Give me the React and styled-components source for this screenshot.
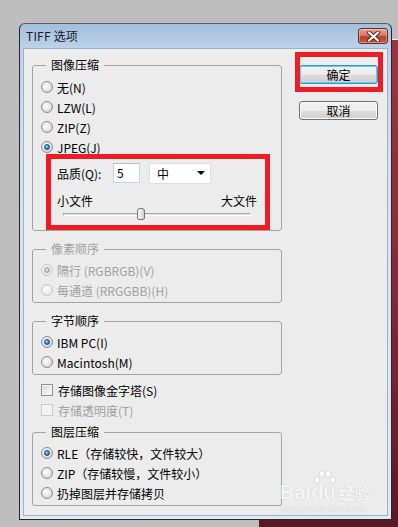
import React from 'react';
import styled, { createGlobalStyle } from 'styled-components';

const GlobalStyle = createGlobalStyle`
    html, body {
        margin: 0;
        padding: 0;
        background: #bebebe;
    }
`;

const Page = styled.div`
    position: relative;
    width: 398px;
    height: 527px;
    overflow: hidden;
    background: #bebebe;
    font-family: "Noto Sans CJK SC", "Noto Sans", sans-serif;
    font-size: 12px;
    color: #000;
`;

const Photo = styled.div`
    position: absolute;
    left: 259px;
    top: 39px;
    right: 0;
    bottom: 0;
    border-top: 1px solid #f2f2f2;
    background: linear-gradient(180deg, #9b3447 0%, #86283a 50%, #5a1824 100%);
`;

const Window = styled.div`
    position: absolute;
    left: 19px;
    top: 23px;
    width: 373px;
    height: 497px;
    box-sizing: border-box;
    display: flex;
    flex-direction: column;
    border: 1px solid #262626;
    border-top-color: #5c5c5c;
    border-radius: 6px 6px 0 0;
    background: linear-gradient(180deg, #a3bedc 0, #bcd2ea 24px, #d2e1f1 140px, #e0eaf5 100%);
`;

const TitleBar = styled.div`
    height: 24px;
    flex: none;
    display: flex;
    align-items: center;
    justify-content: space-between;
    padding: 0 3px 0 6px;
`;

const Title = styled.span`
    font-size: 12px;
    color: #1a1a1a;
    line-height: 16px;
    letter-spacing: 0.2px;
`;

const CloseButton = styled.div`
    width: 30px;
    height: 16px;
    box-sizing: border-box;
    display: flex;
    align-items: center;
    justify-content: center;
    border: 1px solid #6b2a1f;
    border-radius: 3px;
    background: linear-gradient(180deg, #e3a493 0%, #d07a64 45%, #b7442e 55%, #c45a40 100%);
    box-shadow: inset 0 0 0 1px rgba(255, 255, 255, 0.35);
`;

const Client = styled.div`
    flex: 1;
    margin: 0 3px 3px;
    border: 1px solid #9db2c9;
    background: #ececec;
    display: flex;
    padding: 8px 0 0 8px;
`;

const LeftColumn = styled.div`
    width: 250px;
    display: flex;
    flex-direction: column;
`;

const ButtonColumn = styled.div`
    display: flex;
    flex-direction: column;
    gap: 17px;
    margin: 8px 0 0 17px;
`;

const GroupBox = styled.fieldset`
    margin: ${(p) => p.$gap || 0}px 0 0;
    padding: ${(p) => p.$padTop || 3}px 0 ${(p) => p.$padBottom || 2}px 8px;
    border: 1px solid #a3a3a3;
    border-radius: 3px;
    min-width: 0;
`;

const Legend = styled.legend`
    padding: 0 5px;
    margin-left: 5px;
    font-size: 12px;
    line-height: 16px;
    color: ${(p) => (p.$disabled ? '#a0a0a0' : '#000')};
`;

const OptionRow = styled.div`
    height: 20px;
    display: flex;
    align-items: center;
    gap: 4px;
    color: ${(p) => (p.$disabled ? '#a0a0a0' : '#000')};
    white-space: nowrap;
`;

const RadioMark = styled.span`
    position: relative;
    flex: none;
    width: 12px;
    height: 12px;
    box-sizing: border-box;
    border-radius: 50%;
    border: 1px solid ${(p) => (p.$disabled ? '#c6c6c6' : '#8c8c8c')};
    background: ${(p) =>
        p.$disabled
            ? 'radial-gradient(circle at 40% 40%, #fbfbfb 0, #eeeeee 55%, #e0e0e0 100%)'
            : 'radial-gradient(circle at 40% 40%, #ffffff 0, #e8e8e8 45%, #c6c6c6 100%)'};

    &::after {
        content: '';
        display: ${(p) => (p.$checked ? 'block' : 'none')};
        position: absolute;
        left: 2px;
        top: 2px;
        width: 6px;
        height: 6px;
        box-sizing: border-box;
        border-radius: 50%;
        border: 1px solid ${(p) => (p.$disabled ? '#9a9a9a' : '#174a80')};
        background: ${(p) =>
            p.$disabled
                ? 'radial-gradient(circle at 40% 35%, #e6e6e6 0, #b0b0b0 100%)'
                : 'radial-gradient(circle at 40% 35%, #b5e6ff 0, #3298ea 45%, #0e5aa8 100%)'};
    }
`;

const CheckMark = styled.span`
    flex: none;
    width: 12px;
    height: 12px;
    box-sizing: border-box;
    margin-right: 1px;
    border: 1px solid ${(p) => (p.$disabled ? '#c8c8c8' : '#8e8e8e')};
    background: ${(p) =>
        p.$disabled
            ? '#f2f2f2'
            : 'linear-gradient(135deg, #d6d6d6 0%, #eeeeee 60%, #fafafa 100%)'};
    box-shadow: inset 0 0 0 1px ${(p) => (p.$disabled ? '#f7f7f7' : '#f4f4f4')};
`;

const QualityPanel = styled.div`
    width: 200px;
    margin: 0 0 0 16px;
    padding: 6px 0 8px;
`;

const QualityRow = styled.div`
    display: flex;
    align-items: center;
    height: 20px;
`;

const FieldLabel = styled.span`
    width: 56px;
    flex: none;
`;

const NumberField = styled.div`
    width: 27px;
    height: 20px;
    box-sizing: border-box;
    border: 1px solid #c9d3de;
    border-top-color: #b5c0cc;
    background: #fff;
    padding-left: 3px;
    line-height: 18px;
`;

const Select = styled.div`
    width: 62px;
    height: 21px;
    box-sizing: border-box;
    margin-left: 9px;
    border: 1px solid #d8dfe7;
    background: #fff;
    display: flex;
    align-items: center;
    justify-content: space-between;
    padding: 0 5px 0 7px;
`;

const Arrow = styled.span`
    width: 0;
    height: 0;
    border-left: 4px solid transparent;
    border-right: 4px solid transparent;
    border-top: 4px solid #000;
`;

const SizeLabels = styled.div`
    display: flex;
    justify-content: space-between;
    line-height: 14px;
    margin-top: 11px;
`;

const Slider = styled.div`
    position: relative;
    width: 188px;
    height: 12px;
    margin-left: 6px;
    display: flex;
    align-items: center;
`;

const Track = styled.div`
    width: 100%;
    height: 3px;
    box-sizing: border-box;
    border-top: 1px solid #a9a9a9;
    border-left: 1px solid #a9a9a9;
    border-bottom: 1px solid #ffffff;
    border-right: 1px solid #ffffff;
    background: #dedede;
`;

const Thumb = styled.div`
    position: absolute;
    top: 0;
    width: 8px;
    height: 12px;
    box-sizing: border-box;
    margin-left: -4px;
    border: 1px solid #767676;
    border-radius: 3px 3px 2px 2px;
    background: linear-gradient(90deg, #f7f7f7 0%, #e6e6e6 50%, #cfcfcf 100%);
`;

const CheckList = styled.div`
    margin-top: 5px;
    padding-left: 9px;
`;

const Button = styled.div`
    width: 79px;
    height: 19px;
    box-sizing: border-box;
    display: flex;
    align-items: center;
    justify-content: center;
    border: 1px solid ${(p) => (p.$focused ? '#3a8fc6' : '#707070')};
    border-radius: 3px;
    background: linear-gradient(180deg, #f3f3f3 0%, #ebebeb 50%, #dddddd 51%, #cfcfcf 100%);
    box-shadow: inset 0 0 0 1px ${(p) => (p.$focused ? '#5fd0f4' : '#fbfbfb')};
    line-height: 16px;
`;

const Highlight = styled.div`
    position: absolute;
    left: ${(p) => p.$x}px;
    top: ${(p) => p.$y}px;
    width: ${(p) => p.$w}px;
    height: ${(p) => p.$h}px;
    box-sizing: border-box;
    border: 5px solid #ee1c25;
    pointer-events: none;
`;

const Watermark = styled.div`
    position: absolute;
    left: 280px;
    top: 470px;
    width: 92px;
    color: rgba(255, 255, 255, 0.9);
    text-shadow: 0 0 1px rgba(110, 110, 110, 0.45);
    pointer-events: none;
`;

const Brand = styled.div`
    position: relative;
    display: flex;
    align-items: flex-end;
    height: 32px;
    font-family: "Liberation Sans", Arial, sans-serif;
    font-weight: bold;
    font-size: 20px;
    line-height: 20px;
`;

const BrandCn = styled.span`
    font-family: "Noto Sans CJK SC", sans-serif;
    font-size: 16px;
    line-height: 20px;
    font-weight: bold;
    margin-left: 3px;
`;

const Paw = styled.svg`
    position: absolute;
    left: 33px;
    top: 0;
`;

const Domain = styled.div`
    font-family: "Liberation Serif", serif;
    font-size: 11px;
    line-height: 12px;
    letter-spacing: 0.3px;
`;

const Radio = ({ label, checked, disabled }) => (
    <OptionRow $disabled={disabled}>
        <RadioMark $checked={checked} $disabled={disabled} />
        {label}
    </OptionRow>
);

const Checkbox = ({ label, disabled }) => (
    <OptionRow $disabled={disabled}>
        <CheckMark $disabled={disabled} />
        {label}
    </OptionRow>
);

const quality = 5;
const qualityMax = 12;

const App = () => (
    <Page>
        <GlobalStyle />
        <Photo />
        <Window>
            <TitleBar>
                <Title>TIFF 选项</Title>
                <CloseButton>
                    <svg width="13" height="11" viewBox="0 0 13 11">
                        <path d="M2 1.5 L11 9.5 M11 1.5 L2 9.5" stroke="#5a2018" strokeWidth="4" strokeLinecap="round" />
                        <path d="M2 1.5 L11 9.5 M11 1.5 L2 9.5" stroke="#ffffff" strokeWidth="2.2" strokeLinecap="round" />
                    </svg>
                </CloseButton>
            </TitleBar>
            <Client>
                <LeftColumn>
                    <GroupBox $padTop={4} $padBottom={0}>
                        <Legend>图像压缩</Legend>
                        <Radio label="无(N)" />
                        <Radio label="LZW(L)" />
                        <Radio label="ZIP(Z)" />
                        <Radio label="JPEG(J)" checked />
                        <QualityPanel>
                            <QualityRow>
                                <FieldLabel>品质(Q):</FieldLabel>
                                <NumberField>{quality}</NumberField>
                                <Select>
                                    中
                                    <Arrow />
                                </Select>
                            </QualityRow>
                            <SizeLabels>
                                <span>小文件</span>
                                <span>大文件</span>
                            </SizeLabels>
                            <Slider>
                                <Track />
                                <Thumb style={{ left: `${(quality / qualityMax) * 100}%` }} />
                            </Slider>
                        </QualityPanel>
                    </GroupBox>

                    <GroupBox $gap={10}>
                        <Legend $disabled>像素顺序</Legend>
                        <Radio label="隔行 (RGBRGB)(V)" checked disabled />
                        <Radio label="每通道 (RRGGBB)(H)" disabled />
                    </GroupBox>

                    <GroupBox $gap={10}>
                        <Legend>字节顺序</Legend>
                        <Radio label="IBM PC(I)" checked />
                        <Radio label="Macintosh(M)" />
                    </GroupBox>

                    <CheckList>
                        <Checkbox label="存储图像金字塔(S)" />
                        <Checkbox label="存储透明度(T)" disabled />
                    </CheckList>

                    <GroupBox $gap={4}>
                        <Legend>图层压缩</Legend>
                        <Radio label="RLE（存储较快，文件较大）" checked />
                        <Radio label="ZIP（存储较慢，文件较小）" />
                        <Radio label="扔掉图层并存储拷贝" />
                    </GroupBox>
                </LeftColumn>

                <ButtonColumn>
                    <Button $focused>确定</Button>
                    <Button>取消</Button>
                </ButtonColumn>
            </Client>
        </Window>

        <Highlight $x={295} $y={52} $w={88} $h={40} />
        <Highlight $x={46} $y={154} $w={224} $h={76} />

        <Watermark>
            <Brand>
                Bai
                <span>du</span>
                <BrandCn>经验</BrandCn>
                <Paw width="24" height="15" viewBox="0 0 24 15">
                    <g fill="rgba(255,255,255,0.9)" stroke="rgba(120,120,120,0.35)" strokeWidth="0.6">
                        <ellipse cx="4" cy="10" rx="2.6" ry="3.2" />
                        <ellipse cx="9" cy="4" rx="2.6" ry="3.2" />
                        <ellipse cx="15" cy="4" rx="2.6" ry="3.2" />
                        <ellipse cx="20" cy="10" rx="2.6" ry="3.2" />
                    </g>
                </Paw>
            </Brand>
            <Domain>jingyan.baidu.com</Domain>
        </Watermark>
    </Page>
);

export default App;
